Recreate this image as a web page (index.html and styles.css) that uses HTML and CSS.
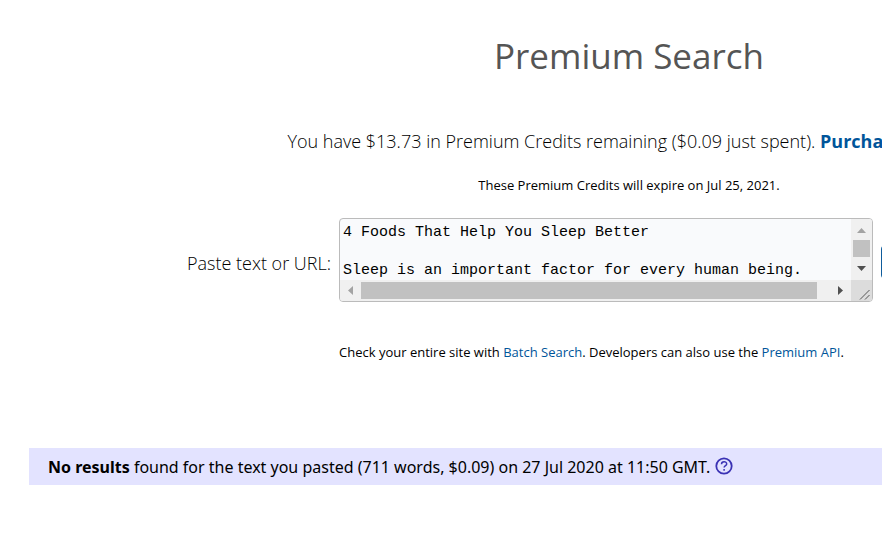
FILE: index.html
```html
<!DOCTYPE html>
<html lang="en">
<head>
  <meta charset="UTF-8">
  <meta name="viewport" content="width=device-width, initial-scale=1.0">
  <title>Premium Search</title>
  <link rel="stylesheet" href="styles.css">
</head>
<body>
  <main class="page">
    <h1>Premium Search</h1>
    <p class="credits">You have $13.73 in Premium Credits remaining ($0.09 just spent). <a href="#">Purchase more...</a></p>
    <p class="expiry">These Premium Credits will expire on Jul 25, 2021.</p>

    <form class="search">
      <label for="text">Paste text or URL:</label>
      <div class="textbox">
        <textarea id="text" wrap="off" spellcheck="false">4 Foods That Help You Sleep Better

Sleep is an important factor for every human being.</textarea>
        <div class="vbar">
          <svg width="21" height="21" viewBox="0 0 21 21"><path d="M6 14h9l-4.500-5z" fill="#a3a3a3"/></svg>
          <span class="vthumb"></span>
          <svg width="21" height="21" viewBox="0 0 21 21"><path d="M6 7h9l-4.500 5z" fill="#505050"/></svg>
        </div>
        <div class="hbar">
          <svg width="21" height="21" viewBox="0 0 21 21"><path d="M13 6v9l-5-4.500z" fill="#a3a3a3"/></svg>
          <span class="hthumb"></span>
          <svg width="21" height="21" viewBox="0 0 21 21"><path d="M8 6v9l5-4.500z" fill="#505050"/></svg>
        </div>
        <div class="corner">
          <svg width="21" height="21" viewBox="0 0 21 21"><path d="M9 19.500l9.500-9.500M14 19.500l4.500-4.500" stroke="#555" fill="none"/></svg>
        </div>
      </div>
      <button type="submit" aria-label="Search"></button>
      <p class="hint">Check your entire site with <a href="#">Batch Search</a>. Developers can also use the <a href="#">Premium API</a>.</p>
    </form>

    <div class="results">
      <b>No results</b> found for the text you pasted (711 words, $0.09) on 27 Jul 2020 at 11:50 GMT.
      <a class="help" href="#" aria-label="Help">
        <svg width="18" height="18" viewBox="0 0 18 18" fill="none" stroke="#3a32b4">
          <circle cx="9" cy="9" r="7.700" stroke-width="1.800"/>
          <path d="M6.500 7.200c0-3.300 5.200-3.200 5.200-.3 0 1.800-2.600 1.700-2.600 3.700M9.100 12v1.700" stroke-width="1.500"/>
        </svg>
      </a>
    </div>
  </main>
</body>
</html>
```
FILE: styles.css
```css
body {
  margin: 0;
  background: #fff;
  color: #000;
  font-family: "Open Sans", "Noto Sans", sans-serif;
  font-size: 18px;
  font-weight: 300;
  overflow-x: hidden;
}
/* wide layout, narrower windows cut it off on the right */
.page {
  min-width: 1200px;
  padding: 32px 29px;
}
h1 {
  margin: 0;
  color: #555;
  font-size: 35px;
  font-weight: normal;
  line-height: 48px;
  text-align: center;
}
p {
  margin: 0;
}
a {
  color: #00559a;
  text-decoration: none;
}
.credits {
  margin-top: 48px;
  line-height: 26px;
  text-align: center;
}
.credits a {
  font-weight: bold;
}
.expiry {
  margin-top: 20px;
  font-size: 13px;
  font-weight: normal;
  line-height: 22px;
  text-align: center;
}
.search {
  display: grid;
  grid-template-columns: auto 534px 190px;
  column-gap: 8px;
  align-items: center;
  justify-content: center;
  margin-top: 22px;
}
label {
  padding-top: 6px;
}
.textbox {
  display: grid;
  grid-template-columns: 1fr 21px;
  grid-template-rows: 61px 21px;
  border: 1px solid #bbb;
  border-radius: 4px;
  background: #f9fafc;
  overflow: hidden;
}
.textbox svg {
  display: block;
}
textarea {
  margin: 0;
  padding: 4px 3px 0;
  border: 0;
  background: transparent;
  color: #000;
  font-family: "Liberation Mono", monospace;
  font-size: 15px;
  line-height: 19px;
  resize: none;
  overflow: hidden;
}
.vbar,
.hbar {
  display: flex;
  background: #f0f0f0;
}
.vbar {
  flex-direction: column;
}
.vthumb {
  flex: 1;
  margin: 0 2px 2px;
  background: #c1c1c1;
}
.hthumb {
  flex: 1;
  margin: 2px 13px 2px 0;
  background: #c1c1c1;
}
.corner {
  background: #dcdcdc;
}
button {
  height: 34px;
  margin-top: 4px;
  border: 1px solid #0f5c9c;
  border-radius: 4px;
  background: #0f6fb5;
}
.hint {
  grid-column: 2;
  margin-top: 39px;
  font-size: 13px;
  font-weight: normal;
  line-height: 22px;
}
.results {
  margin-top: 85px;
  padding: 7px 19px 5px;
  background: #e3e3ff;
  font-family: "Noto Sans", sans-serif;
  font-size: 16px;
  font-weight: normal;
  line-height: 25px;
}
.help svg {
  vertical-align: -2px;
}
```
